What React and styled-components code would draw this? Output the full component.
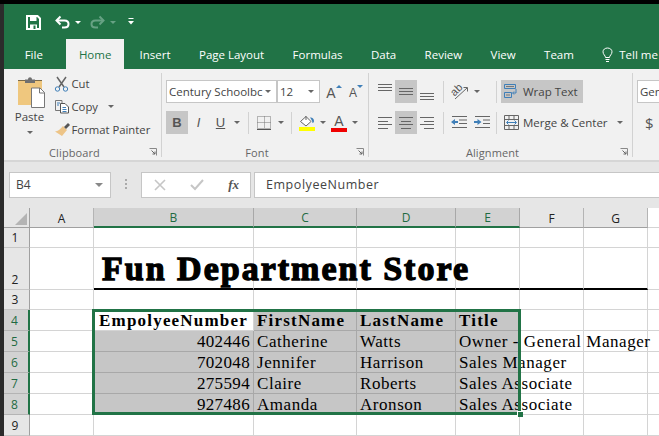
import React from "react";
import styled, { createGlobalStyle } from "styled-components";

const GREEN = "#217346";
const UI = `"Open Sans", "Noto Sans", sans-serif`;
const SERIF = `"Liberation Serif", serif`;

const Global = createGlobalStyle`
  html, body { margin: 0; padding: 0; background: #2b2b2b; overflow: hidden; }
  * { box-sizing: border-box; }
`;

const Page = styled.div`
  width: 659px; height: 436px; overflow: hidden; background: #2b2b2b;
  display: flex; flex-direction: column; font-family: ${UI}; font-size: 11.5px; color: #444;
`;
const TopEdge = styled.div`height: 4px; background: #000; flex: none;`;
const Window = styled.div`flex: 1; margin-left: 4px; display: flex; flex-direction: column; background: #fff; min-height: 0;`;

const TitleBar = styled.div`height: 35px; flex: none; background: ${GREEN}; display: flex; align-items: center; padding: 1px 0 0 22px;`;
const Qat = styled.span`display: flex; margin-right: ${p => p.$gap || 0}px;`;

const TabBar = styled.div`height: 30px; flex: none; background: ${GREEN}; display: flex; padding-left: 6.5px; color: #fff; font-size: 11.5px; overflow: hidden;`;
const Tab = styled.div`
  padding: 0 14.2px; display: flex; align-items: center; white-space: nowrap; height: 30px; flex: none;
  ${p => p.$active && `background:#f1f1f1;color:${GREEN};padding:0 13px;margin:0 1px 0 8.8px;`}
`;
const TabIcon = styled.span`display: flex; margin-right: 6px;`;

const Ribbon = styled.div`height: 93px; flex: none; background: #f1f1f1; border-bottom: 2px solid #d6d6d6; display: flex; padding: 4px 0 0; overflow: hidden;`;
const Group = styled.div`
  width: ${p => p.$w}px; flex: none; position: relative; display: flex; flex-direction: column;
  border-right: ${p => p.$open ? "none" : "1px solid #d2d2d2"}; height: 84px;
`;
const GroupBody = styled.div`flex: 1; display: flex; padding: ${p => p.$pad || "7px 0 0 4px"}; min-height: 0;`;
const GroupLabel = styled.div`height: 12px; flex: none; text-align: center; font-size: 11px; color: #666; line-height: 16px; letter-spacing: .1px; padding-right: 16px;`;
const Launcher = styled.span`position: absolute; right: 4px; bottom: 1px; display: flex;`;

const PasteBtn = styled.div`width: 32px; margin: 0 8px 0 9.5px; flex: none; display: flex; flex-direction: column; align-items: center; font-size: 11.5px; color: #444;`;
const ClipList = styled.div`display: flex; flex-direction: column; margin-top: -5px;`;
const ClipItem = styled.div`height: 23px; display: flex; align-items: center; white-space: nowrap; font-size: 11.3px;`;
const ClipIcon = styled.span`width: 16px; display: flex; justify-content: center; margin-right: 2px;`;

const Stack = styled.div`display: flex; flex-direction: column; gap: 8px;`;
const Line = styled.div`display: flex; align-items: center; height: 23px;`;
const SelectBox = styled.div`
  width: ${p => p.$w}px; height: 23px; background: #fff; border: 1px solid #c6c6c6; margin-left: ${p => p.$ml || 0}px; flex: none;
  display: flex; align-items: center; justify-content: space-between; padding: 0 5px 0 2px; font-size: 11.5px; color: #444; white-space: nowrap; overflow: hidden;
`;
const Tool = styled.span`
  width: ${p => p.$w || 22}px; height: 23px; flex: none; display: flex; align-items: center; justify-content: center;
  margin-left: ${p => p.$ml || 0}px; background: ${p => p.$on ? "#c6c6c6" : "transparent"};
  font-family: "Liberation Sans", sans-serif; font-size: 13px; color: #555;
  font-weight: ${p => p.$bold ? 700 : 400}; font-style: ${p => p.$italic ? "italic" : "normal"};
  text-decoration: ${p => p.$under ? "underline" : "none"};
`;
const SizeTool = styled(Tool)`font-size: ${p => p.$size}px; padding-top: 2px; gap: 0; align-items: center;`;
const Tick = styled.span`
  width: 0; height: 0; flex: none; border: 3px solid transparent; border-bottom: 0; border-top: 3px solid #3f7fb8; margin: -12px 0 0 0;
  ${p => p.$up && `border-top: 0; border-bottom: 3px solid #3f7fb8;`}
`;
const ColorA = styled(Tool)`flex-direction: column; line-height: 14px; font-size: 14px; width: 16px;`;
const ColorBar = styled.span`width: 16px; height: 4px; background: #f00000; flex: none;`;
const Caret = styled.span`
  width: 0; height: 0; flex: none; border: 3px solid transparent; border-top: 3px solid ${p => p.$c || "#666"}; border-bottom: 0;
  margin-left: ${p => p.$ml || 0}px; margin-top: ${p => p.$mt || 0}px;
`;
const Sep = styled.span`width: 1px; height: 22px; flex: none; background: #d2d2d2; margin: 0 ${p => p.$mr ?? 7}px 0 ${p => p.$ml ?? 7}px;`;
const Spacer = styled.span`width: ${p => p.$w}px; flex: none;`;
const WideBtn = styled.div`
  height: 23px; width: ${p => p.$w}px; flex: none; display: flex; align-items: center; padding-left: 3px; gap: ${p => p.$gap ?? 4}px;
  background: ${p => p.$on ? "#c6c6c6" : "transparent"}; white-space: nowrap; font-size: 11.5px; color: #444;
`;
const Dollar = styled(Line)`font-size: 15px; color: #555; padding-left: 8px;`;
const NumberBox = styled(SelectBox)`margin-right: -20px;`;

const FormulaBar = styled.div`height: 46px; flex: none; background: #e6e6e6; display: flex; align-items: center; padding: 0 0 1px 5px;`;
const NameBox = styled.div`
  width: 102px; height: 26px; background: #fff; border: 1px solid #c6c6c6; display: flex; align-items: center; justify-content: space-between;
  padding: 0 7px 0 6px; font-size: 12px; color: #444; flex: none;
`;
const NameCaret = styled.span`width: 0; height: 0; border: 4px solid transparent; border-top: 4px solid #888; border-bottom: 0;`;
const Grip = styled.span`width: 30px; display: flex; justify-content: center; flex: none;`;
const FxBox = styled.div`
  width: 110px; height: 26px; background: #fff; border: 1px solid #c6c6c6; display: flex; align-items: center; justify-content: space-between; padding: 0 11px 0 12px; flex: none;
`;
const FxText = styled.span`font-family: "Liberation Serif", serif; font-style: italic; font-weight: 700; font-size: 13px; color: #555;`;
const FormulaInput = styled.div`
  flex: 1; margin-left: 3px; height: 26px; background: #fff; border: 1px solid #c6c6c6; border-right: 0; display: flex; align-items: center; padding-left: 11px; font-size: 12.5px; color: #444; letter-spacing: .55px;
`;

const Sheet = styled.div`
  position: relative; flex: 1; display: grid; background: #fff; overflow: hidden;
  grid-template-columns: 26px 64px 160px 103px 99px 64px 64px 64px 1fr;
  grid-template-rows: 20px 20px 42px 20px 21px 21px 21px 21px 21px 21px;
`;
const Corner = styled.div`
  background: #e6e6e6; border-right: 1px solid #a0a0a0; border-bottom: 1px solid #a0a0a0; display: flex; align-items: flex-end; justify-content: flex-end; padding: 0 2px 2px 0;
`;
const ColHead = styled.div`
  display: flex; align-items: center; justify-content: center; font-size: 12px; padding-top: 1px;
  background: ${p => p.$on ? "#d2d2d2" : "#e6e6e6"}; color: ${p => p.$on ? "#1f6b42" : "#222"};
  border-right: 1px solid ${p => p.$on ? "#a8a8a8" : "#b4b4b4"};
  border-bottom: ${p => p.$on ? `2px solid ${GREEN}` : "1px solid #a0a0a0"};
`;
const RowHead = styled.div`
  display: flex; align-items: flex-end; justify-content: center; font-size: 12px; padding: 0 3px 1px 0; line-height: 17px;
  background: ${p => p.$on ? "#d2d2d2" : "#e6e6e6"}; color: ${p => p.$on ? "#1f6b42" : "#222"};
  border-right: ${p => p.$on ? `2px solid ${GREEN}` : "1px solid #a0a0a0"};
  border-bottom: 1px solid ${p => p.$on ? "#b4b4b4" : "#c6c6c6"};
`;
const Cell = styled.div`
  min-width: 0; display: flex; align-items: flex-end; white-space: nowrap; padding: 0 3px 0 ${p => p.$pl ?? 3}px;
  justify-content: ${p => p.$right ? "flex-end" : "flex-start"};
  background: ${p => p.$sel ? "#c6c6c6" : "#fff"};
  border-right: 1px solid ${p => p.$sel ? "#a8a8a8" : "#d4d4d4"};
  border-bottom: ${p => p.$rule ? "2px solid #000" : `1px solid ${p.$sel ? "#a8a8a8" : "#d4d4d4"}`};
`;
const CellText = styled.span`
  position: relative; z-index: 1; color: #000; font-family: ${SERIF}; font-size: 17px; line-height: 19px;
  letter-spacing: ${p => p.$spacing ?? 0.55}px; font-weight: ${p => p.$bold ? 700 : 400};
`;
const TitleText = styled.span`
  position: relative; z-index: 1; color: #000; font-family: ${SERIF}; font-size: 34px; line-height: 38px; font-weight: 700;
  letter-spacing: 2px; -webkit-text-stroke: 1.3px #000; margin-left: 5px;
`;
const SelectionFrame = styled.div`
  position: absolute; z-index: 2; left: 88px; top: 101px; width: 429px; height: 106px; border: 3px solid ${GREEN}; pointer-events: none;
`;
const FillHandle = styled.span`position: absolute; right: -5px; bottom: -5px; width: 6px; height: 6px; background: ${GREEN}; border: 1px solid #fff; border-width: 1px 0 0 1px;`;
const EndCol = styled.div`border-bottom: 1px solid #d4d4d4; background: #fff;`;

const I = ({ w = 16, h = 16, children }) => <svg width={w} height={h} viewBox={`0 0 ${w} ${h}`} fill="none" style={{ display: "block", flex: "none" }}>{children}</svg>;

const lines = (ys, x1s, x2s, c = "#666") => ys.map((y, i) => <path key={i} d={`M${x1s[i]} ${y + .5}H${x2s[i]}`} stroke={c} />);

const AlignV = ({ pos }) => {
  const y0 = pos === "top" ? 0 : pos === "mid" ? 4 : 9;
  return <I w={16} h={16}>{lines([y0, y0 + 3, y0 + 6], [1, 1, 1], [15, 15, 15])}</I>;
};
const AlignH = ({ pos }) => {
  const a = pos === "left" ? [1, 1, 1, 1] : pos === "center" ? [1, 3, 1, 3] : [1, 5, 1, 5];
  const b = pos === "left" ? [15, 11, 15, 11] : pos === "center" ? [15, 13, 15, 13] : [15, 15, 15, 15];
  return <I w={16} h={16}>{lines([2, 6, 9, 13], a, b)}</I>;
};
const Launch = () => <I w={8} h={8}><path d="M.5 .5H7.5V7.5" stroke="#888" fill="none" /><path d="M2.5 2.5L6 6M6 3.5V6H3.5" stroke="#666" /></I>;

const colHeads = ["A", "B", "C", "D", "E", "F", "G"];
const rows = [
  ["402446", "Catherine", "Watts", "Owner - General Manager"],
  ["702048", "Jennifer", "Harrison", "Sales Manager"],
  ["275594", "Claire", "Roberts", "Sales Associate"],
  ["927486", "Amanda", "Aronson", "Sales Associate"],
];

const Blank = ({ n, ...p }) => Array.from({ length: n }, (_, i) => <Cell key={i} {...p} />);

export default function App() {
  return (
    <Page>
      <Global />
      <TopEdge />
      <Window>
        <TitleBar>
          <Qat $gap={14}>
            <I w={15} h={15}>
              <path d="M1 1H11.5L14 3.5V14H1Z" stroke="#fff" strokeWidth="2" />
              <path d="M4 1.5H10.5V6H4Z" fill="#fff" />
              <path d="M4 9.5H11V14H4Z" fill="#fff" /><path d="M7.5 10.5H9.5V14H7.5Z" fill={GREEN} />
            </I>
          </Qat>
          <Qat $gap={5}>
            <I w={15} h={14}><path d="M5.5 1.5L1.5 5.5L5.5 9.5" stroke="#fff" strokeWidth="2" /><path d="M2 5.5H9.5C12 5.5 13.5 7 13.5 9C13.5 11 12 12.5 9.5 12.5H7" stroke="#fff" strokeWidth="2" /></I>
          </Qat>
          <Qat $gap={9}><Caret $c="#fff" /></Qat>
          <Qat $gap={5}>
            <I w={15} h={14}><path d="M9.5 1.5L13.5 5.5L9.5 9.5" stroke="#67a284" strokeWidth="2" /><path d="M13 5.5H5.5C3 5.5 1.5 7 1.5 9C1.5 11 3 12.5 5.5 12.5H8" stroke="#67a284" strokeWidth="2" /></I>
          </Qat>
          <Qat $gap={12}><Caret $c="#67a284" /></Qat>
          <Qat>
            <I w={7} h={8}><path d="M.5 .5H5.5" stroke="#fff" /><path d="M0 3H6L3 6.5Z" fill="#fff" /></I>
          </Qat>
        </TitleBar>

        <TabBar>
          <Tab>File</Tab>
          <Tab $active>Home</Tab>
          <Tab>Insert</Tab>
          <Tab>Page Layout</Tab>
          <Tab>Formulas</Tab>
          <Tab>Data</Tab>
          <Tab>Review</Tab>
          <Tab>View</Tab>
          <Tab>Team</Tab>
          <Tab>
            <TabIcon>
              <I w={11} h={15}><path d="M3.5 10.5C3.5 8.5 1 7.5 1 4.8C1 2.6 3 1 5.5 1C8 1 10 2.6 10 4.8C10 7.5 7.5 8.5 7.5 10.5Z" stroke="#fff" /><path d="M3.5 12.5H7.5M4 14.5H7" stroke="#fff" /></I>
            </TabIcon>
            Tell me
          </Tab>
        </TabBar>

        <Ribbon>
          <Group $w={158}>
            <GroupBody $pad="4px 0 0 0">
              <PasteBtn>
                <I w={30} h={32}>
                  <path d="M3 4H27V28H3Z" fill="#efc77e" /><path d="M3 3H27V4H3Z" fill="#7a6a4a" /><path d="M10 2.5H13C13 -.5 17 -.5 17 2.5H20V6H10Z" fill="#6f6f6f" />
                  <path d="M16.5 11H25L29.5 15.5V30.5H16.5Z" fill="#fff" stroke="#777" /><path d="M24.5 11V16H29.5" stroke="#777" />
                </I>
                <span>Paste</span>
                <Caret $mt={7} />
              </PasteBtn>
              <ClipList>
                <ClipItem>
                  <ClipIcon><I w={15} h={16}><path d="M3 1L10 11M12 1L5 11" stroke="#666" strokeWidth="1.5" /><circle cx="3.5" cy="13" r="2.2" stroke="#3f7fb8" /><circle cx="11.5" cy="13" r="2.2" stroke="#3f7fb8" /></I></ClipIcon>
                  Cut
                </ClipItem>
                <ClipItem>
                  <ClipIcon><I w={16} h={15}><path d="M1.5 1.5H8V11.5H1.5Z" stroke="#777" fill="#f1f1f1" /><path d="M6.5 4.5H11L14.5 8V14H6.5Z" stroke="#555" fill="#fff" /><path d="M8.5 8.5H12M8.5 10.5H12.5M8.5 12.5H12.5M3 4H6M3 6H5" stroke="#3f7fb8" /></I></ClipIcon>
                  Copy<Caret $ml={10} />
                </ClipItem>
                <ClipItem>
                  <ClipIcon><I w={16} h={15}><path d="M9 4L13 8L8 14L1 9.5C4 9.5 6 7 9 4Z" fill="#edc487" /><path d="M10 5L14 1L16 3L12 7Z" fill="#555" /></I></ClipIcon>
                  Format Painter
                </ClipItem>
              </ClipList>
            </GroupBody>
            <GroupLabel>Clipboard</GroupLabel>
            <Launcher><Launch /></Launcher>
          </Group>

          <Group $w={207}>
            <GroupBody $pad="7px 0 0 4px">
              <Stack>
                <Line>
                  <SelectBox $w={111}>Century Schoolbc<Caret /></SelectBox>
                  <SelectBox $w={43}>12<Caret /></SelectBox>
                  <SizeTool $w={22} $ml={3} $size={14}>A<Tick $up /></SizeTool>
                  <SizeTool $w={22} $size={12}>A<Tick /></SizeTool>
                </Line>
                <Line>
                  <Tool $on $bold $w={22}>B</Tool>
                  <Tool $italic $w={21}>I</Tool>
                  <Tool $under $w={23}>U</Tool>
                  <Caret $ml={2} />
                  <Sep $ml={8} $mr={8} />
                  <I w={14} h={14}><path d="M.5 .5H13.5V12.5H.5ZM.5 6.5H13.5M7.5 .5V12.5" stroke="#777" strokeDasharray="1 1" /><path d="M0 13.5H14" stroke="#555" /></I>
                  <Caret $ml={7} />
                  <Sep $ml={7} $mr={7} />
                  <I w={16} h={16}>
                    <path d="M1.5 6.5L7 1.5L12 6.5L7 11Z" stroke="#666" fill="#fff" />
                    <path d="M7 1V5" stroke="#666" />
                    <path d="M11 2.5C13 2 15 3.5 15 6C15 7.5 14 8 13.5 8C13.5 6.5 12.5 4.5 11 2.5Z" fill="#3f7fb8" />
                    <path d="M0 12H16V16H0Z" fill="#ffff00" />
                  </I>
                  <Caret $ml={5} />
                  <ColorA $ml={5}>A<ColorBar /></ColorA>
                  <Caret $ml={5} />
                </Line>
              </Stack>
            </GroupBody>
            <GroupLabel>Font</GroupLabel>
            <Launcher><Launch /></Launcher>
          </Group>

          <Group $w={264}>
            <GroupBody $pad="7px 0 0 6px">
              <Stack>
                <Line>
                  <Tool $w={20}><AlignV pos="top" /></Tool>
                  <Tool $w={22} $on><AlignV pos="mid" /></Tool>
                  <Tool $w={18} $ml={1}><AlignV pos="bot" /></Tool>
                  <Sep $ml={7} $mr={7} />
                  <I w={18} h={17}>
                    <text x="0" y="11" fontFamily="Liberation Sans, sans-serif" fontSize="11" fill="#555" transform="rotate(-45 5 8)">ab</text>
                    <path d="M4 16L16 5" stroke="#666" /><path d="M12.5 4.5H16.5V8.5" stroke="#666" />
                  </I>
                  <Caret $ml={5} />
                  <Sep $ml={16} $mr={4} />
                  <WideBtn $w={82} $on>
                    <I w={15} h={15}><path d="M.5 .5H11.5V4.5H.5ZM.5 8.5H7.5V13.5H.5Z" stroke="#3f7fb8" /><path d="M12 5V9H9M10 7.5L8.5 9L10 10.5" stroke="#3f7fb8" /><path d="M2 2.5H10M2 11H6" stroke="#777" /></I>
                    Wrap Text
                  </WideBtn>
                </Line>
                <Line>
                  <Tool $w={20}><AlignH pos="left" /></Tool>
                  <Tool $w={22} $on><AlignH pos="center" /></Tool>
                  <Tool $w={18} $ml={1}><AlignH pos="right" /></Tool>
                  <Sep $ml={7} $mr={7} />
                  <I w={17} h={14}><path d="M1 .5H16M8 4H16M8 7.5H16M1 11.5H16" stroke="#666" /><path d="M0 6L4 3V5H7V7H4V9Z" fill="#3f7fb8" /></I>
                  <Spacer $w={6} />
                  <I w={17} h={14}><path d="M1 .5H16M9 4H16M9 7.5H16M1 11.5H16" stroke="#666" /><path d="M7.5 6L3.5 3V5H0V7H3.5V9Z" fill="#3f7fb8" /></I>
                  <Sep $ml={5} $mr={4} />
                  <WideBtn $w={105} $gap={3}>
                    <I w={16} h={16}>
                      <path d="M.5 .5H14.5V14.5H.5ZM.5 4.5H14.5M.5 10.5H14.5M5 .5V4.5M10 .5V4.5M5 10.5V14.5M10 10.5V14.5" stroke="#666" />
                      <path d="M3 7.5H12" stroke="#3f7fb8" /><path d="M4.5 5.5L2.5 7.5L4.5 9.5M10.5 5.5L12.5 7.5L10.5 9.5" stroke="#3f7fb8" />
                    </I>
                    Merge &amp; Center
                  </WideBtn>
                  <Caret $ml={11} />
                </Line>
              </Stack>
            </GroupBody>
            <GroupLabel>Alignment</GroupLabel>
            <Launcher><Launch /></Launcher>
          </Group>

          <Group $w={26} $open>
            <GroupBody $pad="7px 0 0 4px">
              <Stack>
                <NumberBox $w={40}>Gen</NumberBox>
                <Dollar>$</Dollar>
              </Stack>
            </GroupBody>
          </Group>
        </Ribbon>

        <FormulaBar>
          <NameBox>B4<NameCaret /></NameBox>
          <Grip><I w={4} h={12}><path d="M1 1H3M1 5H3M1 9H3" stroke="#aaa" strokeWidth="2" /></I></Grip>
          <FxBox>
            <I w={12} h={12}><path d="M1 1L11 11M11 1L1 11" stroke="#c6c6c6" strokeWidth="1.6" /></I>
            <I w={14} h={12}><path d="M1 6L5 10L13 1" stroke="#c6c6c6" strokeWidth="2" /></I>
            <FxText>fx</FxText>
          </FxBox>
          <FormulaInput>EmpolyeeNumber</FormulaInput>
        </FormulaBar>

        <Sheet>
          <Corner><I w={12} h={12}><path d="M12 0V12H0Z" fill="#b4b4b4" /></I></Corner>
          {colHeads.map(c => <ColHead key={c} $on={"BCDE".includes(c)}>{c}</ColHead>)}
          <EndCol />

          <RowHead>1</RowHead><Blank n={7} /><EndCol />

          <RowHead>2</RowHead>
          <Cell />
          <Cell $rule><TitleText>Fun Department Store</TitleText></Cell>
          <Blank n={5} $rule />
          <EndCol />

          <RowHead>3</RowHead><Blank n={7} /><EndCol />

          <RowHead $on>4</RowHead>
          <Cell />
          <Cell $pl={5}><CellText $bold $spacing={1.2}>EmpolyeeNumber</CellText></Cell>
          <Cell $sel><CellText $bold $spacing={1.2}>FirstName</CellText></Cell>
          <Cell $sel><CellText $bold $spacing={1.2}>LastName</CellText></Cell>
          <Cell $sel><CellText $bold $spacing={1.2}>Title</CellText></Cell>
          <Blank n={2} /><EndCol />

          {rows.map((r, i) => (
            <React.Fragment key={r[0]}>
              <RowHead $on>{i + 5}</RowHead>
              <Cell />
              <Cell $sel $right><CellText $spacing={0.35}>{r[0]}</CellText></Cell>
              <Cell $sel><CellText>{r[1]}</CellText></Cell>
              <Cell $sel><CellText>{r[2]}</CellText></Cell>
              <Cell $sel><CellText>{r[3]}</CellText></Cell>
              <Blank n={2} /><EndCol />
            </React.Fragment>
          ))}

          <RowHead>9</RowHead><Blank n={7} /><EndCol />
          <SelectionFrame><FillHandle /></SelectionFrame>
        </Sheet>
      </Window>
    </Page>
  );
}
